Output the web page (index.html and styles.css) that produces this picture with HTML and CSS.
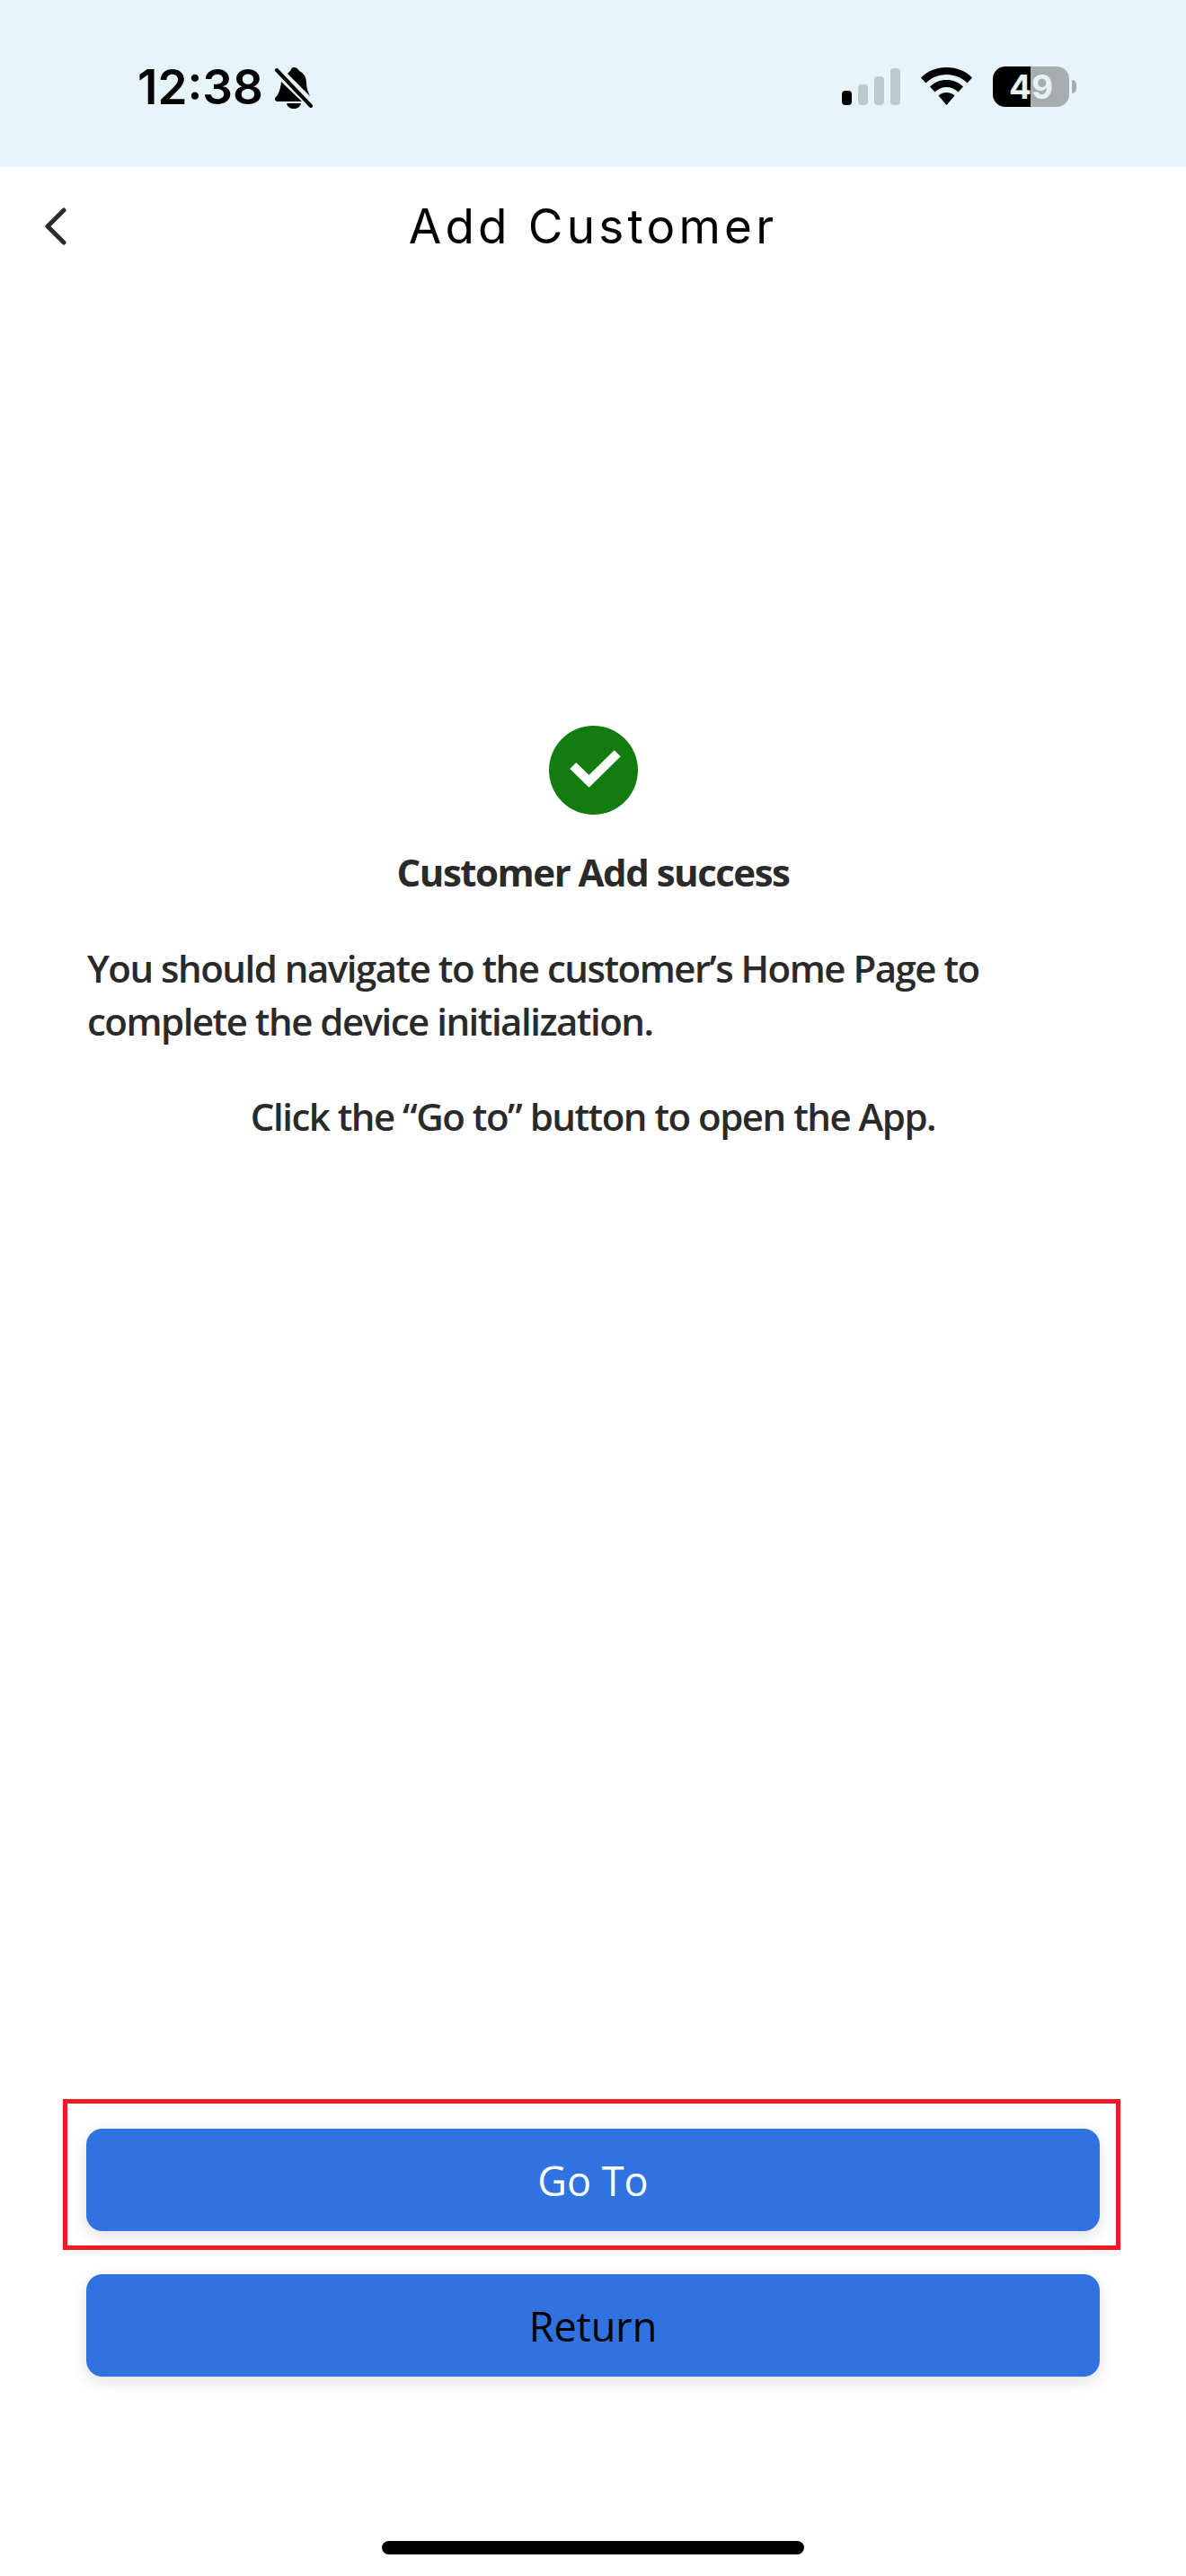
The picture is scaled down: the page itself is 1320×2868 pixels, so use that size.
FILE: index.html
```html
<!doctype html>
<html lang="en">
<head>
	<meta charset="UTF-8">
	<title>Add Customer</title>
	<link rel="stylesheet" href="styles.css">
</head>
<body>
<div class="page">
	<div class="status_bar">
		<div class="status_left">
			<span class="time">12:38</span>
			<svg class="bell" viewBox="0 0 42 46">
				<path d="M21 0c3 0 5 2 6 4 5 2 8 7 8 13 0 6 2 11 4 15L14 7c1-1 2-2 3-3 1-2 2-4 4-4z"/>
				<path d="M7 16 30 38H3c-3 0-4-3-2-5 3-3 5-8 6-17z"/>
				<path d="M13 40h16c-1 4-4 6-8 6s-7-2-8-6z"/>
				<path class="bell_slash" d="M2 3 40 43"/>
			</svg>
		</div>
		<div class="status_right">
			<div class="signal">
				<i class="bar bar1"></i>
				<i class="bar bar2"></i>
				<i class="bar bar3"></i>
				<i class="bar bar4"></i>
			</div>
			<svg class="wifi" viewBox="0 0 57 42">
				<path d="M28.500 0C17 0 7.500 4 0 11.500l5.500 6C11.500 11.500 19.500 8 28.500 8s17 3.500 23 9.500l5.500-6C49.500 4 40 0 28.500 0z"/>
				<path d="M28.500 14c-7.500 0-13.500 2.500-18.500 7.500l5.500 6c3.500-3.500 8-5.500 13-5.500s9.500 2 13 5.500l5.500-6C42 16.500 36 14 28.500 14z"/>
				<path d="M28.500 28c-3.500 0-7 1.500-9 3.500l9 10.500 9-10.500c-2-2-5.500-3.500-9-3.500z"/>
			</svg>
			<div class="battery">
				<div class="battery_body">49</div>
				<div class="battery_nub"></div>
			</div>
		</div>
	</div>

	<div class="nav">
		<svg class="back" viewBox="0 0 24 42">
			<path d="M21 3 3 21 21 39"/>
		</svg>
		<h1 class="nav_title">Add Customer</h1>
	</div>

	<div class="content">
		<svg class="ok_icon" viewBox="0 0 100 100">
			<circle cx="50" cy="50" r="50"/>
			<path d="M27 45 45 62.500 77 31"/>
		</svg>
		<h2 class="ok_title">Customer Add success</h2>
		<p class="ok_text">You should navigate to the customer’s Home Page to complete the device initialization.</p>
		<p class="ok_hint">Click the “Go to” button to open the App.</p>
	</div>

	<div class="actions">
		<div class="go_wrap">
			<button class="btn btn_go">Go To</button>
			<div class="red_frame"></div>
		</div>
		<button class="btn btn_return">Return</button>
	</div>

	<div class="home_bar"><div class="home_line"></div></div>
</div>
</body>
</html>
```

FILE: styles.css
```css
*{box-sizing: border-box;}
html,body{margin: 0;padding: 0;background: #fff;}
.page{width: 1320px;height: 2868px;display: flex;flex-direction: column;font-family: "Open Sans", sans-serif;color: #2a2a2a;}

/*status bar*/
.status_bar{height: 186px;flex: none;background: #e6f5fa;display: flex;justify-content: space-between;padding: 74px 122px 0 153px;color: #000;}
.status_left{display: flex;align-items: flex-start;}
.time{font-family: "Inter", sans-serif;font-weight: 600;font-size: 53px;line-height: 46px;}
.bell{width: 42px;height: 46px;margin-left: 13px;margin-top: 1px;fill: #000;}
.bell_slash{fill: none;stroke: #000;stroke-width: 4px;stroke-linecap: round;}
.status_right{display: flex;align-items: flex-start;height: 46px;}
.signal{display: flex;align-items: flex-end;gap: 7px;height: 43px;margin-top: 0;}
.bar{display: block;width: 11px;border-radius: 4px;background: #bccacc;}
.bar1{height: 16px;background: #000;}
.bar2{height: 23px;}
.bar3{height: 32px;}
.bar4{height: 41px;}
.wifi{width: 57px;height: 42px;margin-left: 23px;margin-top: 1px;fill: #000;}
.battery{display: flex;align-items: center;margin-left: 23px;height: 45px;}
.battery_body{width: 85px;height: 45px;border-radius: 14px;background: linear-gradient(90deg,#000 49.500%,#a6adae 49.500%);color: #e9f2f3;font-family: "Inter", sans-serif;font-weight: 700;font-size: 37px;line-height: 45px;text-align: center;}
.battery_nub{width: 5px;height: 15px;margin-left: 3px;border-radius: 0 8px 8px 0;background: #a6adae;}

/*nav*/
.nav{height: 132px;flex: none;position: relative;display: flex;align-items: center;justify-content: center;}
.back{position: absolute;left: 50px;top: 45px;width: 24px;height: 42px;fill: none;stroke: #2b2b2b;stroke-width: 5px;stroke-linecap: round;stroke-linejoin: round;}
.nav_title{margin: 0;font-family: "Inter", sans-serif;font-weight: 400;font-size: 53px;line-height: 64px;letter-spacing: 4.200px;color: #000;}

/*middle*/
.content{flex: 1;padding: 490px 97px 0;}
.ok_icon{display: block;width: 99px;height: 99px;margin: 0 auto;}
.ok_icon circle{fill: #137c10;}
.ok_icon path{fill: none;stroke: #fff;stroke-width: 10px;}
.ok_title{margin: 39px 0 0;text-align: center;font-size: 42px;line-height: 50px;font-weight: 700;letter-spacing: -1.500px;color: #2a2a2a;}
.ok_text{margin: 52px 0 0;font-size: 42px;line-height: 59px;font-weight: 600;letter-spacing: -1.500px;}
.ok_hint{margin: 47px 0 0;text-align: center;font-size: 42px;line-height: 59px;font-weight: 600;letter-spacing: -1.500px;}

/*buttons*/
.actions{flex: none;padding: 0 96px;display: flex;flex-direction: column;gap: 48px;}
.go_wrap{position: relative;}
.btn{display: block;width: 100%;height: 114px;border: 0;border-radius: 18px;background: #2f72e0;box-shadow: 0 6px 18px rgba(0,0,0,.12);font-family: "Open Sans", sans-serif;font-size: 45px;color: #000;padding: 0;}
.btn_go{color: #fff;}
.red_frame{position: absolute;left: -26px;right: -23px;top: -33px;bottom: -21px;border: 5px solid #ec1c24;}

/*home indicator*/
.home_bar{flex: none;height: 222px;padding-top: 183px;}
.home_line{width: 470px;height: 15px;margin: 0 auto;border-radius: 8px;background: #000;}
```
